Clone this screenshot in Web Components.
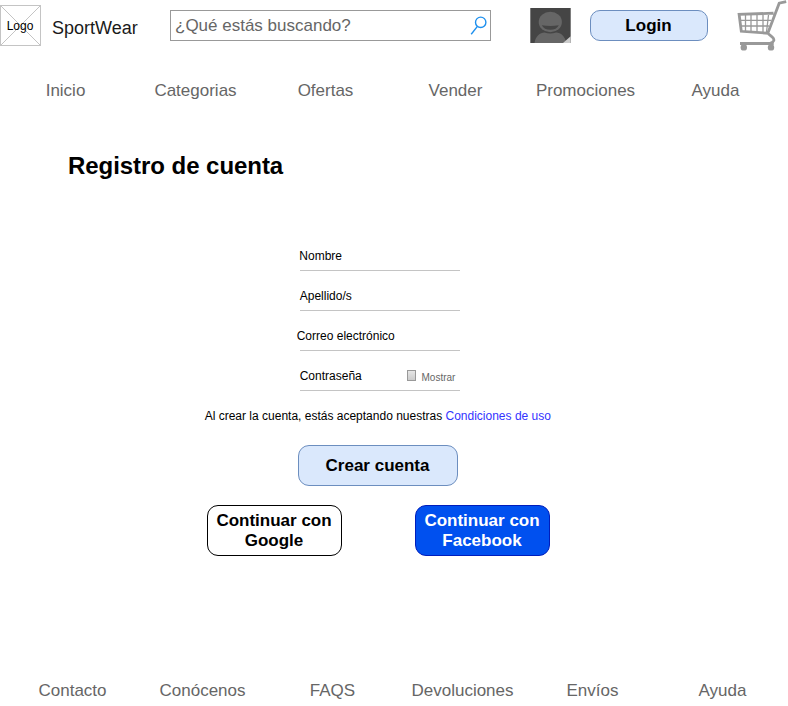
<!DOCTYPE html>
<html lang="es">
<head>
<meta charset="utf-8">
<title>SportWear</title>
<style>
html,body{margin:0;background:#fff}
body{font-family:"Liberation Sans",Arial,sans-serif;color:#000;width:788px;height:706px;overflow:hidden}
</style>
</head>
<body>
<registro-page></registro-page>
<script>
const define = (name, html) => customElements.define(name, class extends HTMLElement {
  constructor() {
    super();
    this.attachShadow({mode: 'open'}).innerHTML = html;
  }
});

define('logo-box', `<style>
:host{display:grid;width:41px;height:41px;flex:none;font-size:12px;line-height:14px}
svg,span{grid-area:1/1}span{place-self:center;white-space:nowrap;padding-right:1px}
</style><svg width="41" height="41" fill="none" stroke="#c4c4c4"><rect x=".5" y=".5" width="40" height="40"/><path d="M1 1 40 40M40 1 1 40"/></svg><span><slot></slot></span>`);

define('search-box', `<style>
:host{display:flex;box-sizing:border-box;width:321px;height:31px;border:1px solid #999;align-items:center;justify-content:space-between;padding:0 2px 0 4px;font-size:17px;line-height:20px;color:#666}
</style><span><slot></slot></span><svg width="18" height="23" viewBox="0 0 18 23" fill="none" stroke="#1e90ee" stroke-width="1.4"><circle cx="10.7" cy="8.3" r="5.2"/><path d="M7.4 12.4 1.2 20.3"/></svg>`);

define('user-avatar', `<style>:host{display:block;width:41px;height:35px}svg{display:block}</style>
<svg width="41" height="35" viewBox="0 0 41 35"><path fill="#454545" d="M.3 0H40.7V35H.3z"/><ellipse cx="20.3" cy="14" rx="11.6" ry="10.2" fill="#666"/><path fill="#454545" d="M11.8 17.2Q20.3 18.8 28.8 17.2Q26.5 21.8 20.3 21.8T11.8 17.2z"/><path fill="#666" d="M4.5 35C5.5 28 10 24.8 14.5 24.5Q20.3 26.5 26 24.5C31 24.8 35 28 36.3 35z"/><path fill="#ccc" d="M33 35 40.7 28.3V35z"/></svg>`);

define('cart-icon', `<style>:host{display:block;width:51px;height:52px}svg{display:block}</style>
<svg width="51" height="52" viewBox="0 0 51 52" fill="none" stroke="#999"><path stroke-width="1.3" d="M8.5 15V32M14 15V32M20 15V33M26 15V33M31.5 15 29.5 32M2.5 20.3H34M3.5 26H32"/><path stroke-width="2.8" d="M49.2 1.7 42.2 3.2 30.8 33.2 4.3 31.3 2.1 14.3 36.5 13.2M30.8 33.2C33.5 36 37.7 37.8 36.8 40.4Q36 42.5 33 43.4"/><path stroke-width="3.2" d="M3 43.5H36.7"/><g fill="#999" stroke="none"><circle cx="6.8" cy="47.4" r="3.2"/><circle cx="34" cy="47.4" r="3.2"/></g></svg>`);

define('action-button', `<style>
:host{display:block;width:var(--w,118px);height:var(--h,31px)}
button{box-sizing:border-box;width:100%;height:100%;margin:0;padding:0 1px 0 0;display:grid;place-items:center;border:1px solid var(--line,#6c8ebf);border-radius:var(--r,10px);background:var(--fill,#dae8fc);color:var(--ink,#000);font:bold 17px/20px "Liberation Sans",Arial,sans-serif;text-align:center}
</style><button><span><slot></slot></span></button>`);

define('link-row', `<style>
:host{display:grid;grid-template-columns:repeat(6,130px);font-size:17px;line-height:20px;color:#666}
::slotted(*){text-align:center}
</style><slot></slot>`);

define('form-field', `<style>
:host{display:flex;box-sizing:border-box;width:160px;height:40px;border-bottom:1px solid #c4c4c4;font-size:12px;line-height:14px;padding-top:18px;white-space:nowrap;justify-content:space-between}
.label{margin-left:var(--shift,-.3px)}
</style><span class="label"><slot></slot></span><slot name="extra"></slot>`);

define('show-toggle', `<style>
:host{display:flex;gap:5px;font-size:10px;line-height:12px;color:#666;padding:3px 5px 0 0}
i{box-sizing:border-box;width:9px;height:11px;margin-top:-2px;border:1px solid #999;background:linear-gradient(#e6e6e6,#ccc)}
</style><i></i><span><slot></slot></span>`);

define('registro-page', `<style>
:host{display:flex;flex-direction:column;width:788px;height:706px}
header{display:flex;height:81px;align-items:flex-start;flex:none}
logo-box{margin-top:5px}
.brand{font-size:18px;line-height:20px;margin:18px 0 0 11px;width:118px;color:#1a1a1a}
search-box{margin-top:10px}
user-avatar{margin:8px 0 0 39px}
.login{margin:10px 0 0 19px}
cart-icon{margin-left:29px;flex:none}
h1{font-size:24px;line-height:28px;letter-spacing:-.05px;margin:51px 0 0 68px;height:79px}
form{display:flex;flex-direction:column;padding-left:300.4px}
.terms{font-size:12px;line-height:14px;margin:18px 0 0 204.7px;white-space:nowrap}
.terms span{color:#33f}
.create{--w:160px;--h:41px;--r:11px;margin:22px 0 0 298px}
.social{display:flex;gap:73px;margin:19px 0 0 207px;--w:135px;--h:51px;--r:11px}
.g{--fill:#fff;--line:#000}
.f{--fill:#0050ef;--line:#001dbc;--ink:#fff}
nav{margin-left:.5px}
footer{margin:auto 0 5px 7.5px}
</style>
<header><logo-box>Logo</logo-box><div class="brand">SportWear</div><search-box>¿Qué estás buscando?</search-box><user-avatar></user-avatar><action-button class="login">Login</action-button><cart-icon></cart-icon></header>
<nav><link-row><span>Inicio</span><span>Categorias</span><span>Ofertas</span><span>Vender</span><span>Promociones</span><span>Ayuda</span></link-row></nav>
<h1>Registro de cuenta</h1>
<form>
<form-field style="--shift:-1.1px">Nombre</form-field>
<form-field style="--shift:-.7px">Apellido/s</form-field>
<form-field style="--shift:-3.7px">Correo electrónico</form-field>
<form-field style="--shift:-.7px">Contraseña<show-toggle slot="extra">Mostrar</show-toggle></form-field>
</form>
<div class="terms">Al crear la cuenta, estás aceptando nuestras <span>Condiciones de uso</span></div>
<action-button class="create">Crear cuenta</action-button>
<div class="social"><action-button class="g">Continuar con<br>Google</action-button><action-button class="f">Continuar con<br>Facebook</action-button></div>
<footer><link-row><span>Contacto</span><span>Conócenos</span><span>FAQS</span><span>Devoluciones</span><span>Envíos</span><span>Ayuda</span></link-row></footer>`);
</script>
</body>
</html>
